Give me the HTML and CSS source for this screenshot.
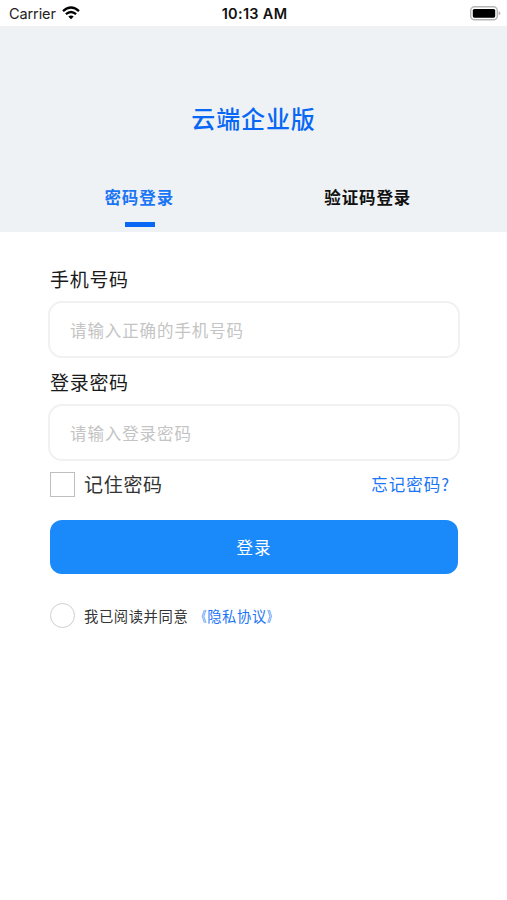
FILE: index.html
```html
<!DOCTYPE html>
<html lang="zh-CN">
<head>
<meta charset="utf-8">
<title>云端企业版</title>
<link rel="stylesheet" href="styles.css">
</head>
<body>
<div class="status">
  <div class="carrier"><span>Carrier</span>
    <svg width="18" height="14" viewBox="0 0 18 14" fill="none" stroke="#000" stroke-width="2.3"><path d="M1 5.1Q9-2 17 5.1"/><path d="M3.9 8.2Q9 3.7 14.1 8.2"/><path d="M6.3 10.5Q9 8.3 11.7 10.5L9 13.3Z" fill="#000" stroke="none"/></svg>
  </div>
  <div class="time">10:13 AM</div>
  <svg class="battery" width="31" height="15" viewBox="0 0 31 15"><rect x=".7" y=".8" width="26.6" height="13" rx="3.8" fill="#fff" stroke="#b5b5b5" stroke-width="1.4"/><rect x="2.8" y="2.9" width="22.4" height="8.8" rx="1.6"/><path d="M28.6 5.2q1.8.6 1.8 2.1t-1.8 2.1z" fill="#b5b5b5"/></svg>
</div>
<header class="hero">
  <h1>云端企业版</h1>
  <nav class="tabs">
    <a class="tab active">密码登录</a>
    <a class="tab">验证码登录</a>
  </nav>
</header>
<main class="form">
  <label for="phone">手机号码</label>
  <input id="phone" type="text" placeholder="请输入正确的手机号码">
  <label for="pass">登录密码</label>
  <input id="pass" type="password" placeholder="请输入登录密码">
  <div class="options">
    <span class="checkbox"></span>
    <span class="remember">记住密码</span>
    <a class="forgot">忘记密码?</a>
  </div>
  <button type="button">登录</button>
  <div class="agreement">
    <span class="radio"></span>
    <span>我已阅读并同意</span>
    <a class="policy"><span class="mark open">《</span>隐私协议<span class="mark close">》</span></a>
  </div>
</main>
</body>
</html>
```
FILE: styles.css
```css
* { box-sizing: border-box; }
body {
  margin: 0;
  min-height: 900px;
  background: #fff;
  color: #1a1a1a;
  font-family: "Noto Sans CJK SC", sans-serif;
}
.status {
  display: grid;
  grid-template-columns: 1fr auto 1fr;
  align-items: center;
  height: 26px;
  padding: 1px 6px 0 9px;
  font: 14.5px/25px Inter, sans-serif;
  color: #222;
}
.carrier { display: flex; align-items: center; gap: 6px; letter-spacing: -.1px; }
.carrier svg { margin-bottom: 1px; }
.time { margin-right: 1px; font-weight: 600; letter-spacing: .3px; color: #111; }
.battery { justify-self: end; margin-bottom: 1px; }
.hero {
  height: 206px;
  padding-top: 74px;
  background: #eef2f5;
}
h1 {
  margin: 0;
  text-align: center;
  font-size: 24px;
  line-height: 36px;
  font-weight: 500;
  letter-spacing: .9px;
  color: #0868f5;
}
.tabs {
  display: flex;
  padding: 46px 25px 0;
}
.tab {
  display: flex;
  flex-direction: column;
  align-items: center;
  flex: 1;
  font-size: 16.5px;
  line-height: 30px;
  font-weight: 600;
  letter-spacing: .9px;
  color: #111;
}
.tab.active { color: #1a75f5; }
.tab.active::after {
  content: "";
  width: 30px;
  height: 5px;
  margin: 10px 0 0 1px;
  background: #0868f5;
}
.form {
  display: flex;
  flex-direction: column;
  padding: 32px 47px 0 48px;
}
label {
  height: 30px;
  padding-left: 2px;
  font-size: 19px;
  line-height: 30px;
  letter-spacing: .7px;
}
input {
  height: 57px;
  margin: 7px 0 9px;
  padding: 0 20px;
  border: 2px solid #f1f1f1;
  border-radius: 14px;
  background: #fff;
  font: 16.5px "Noto Sans CJK SC", sans-serif;
  letter-spacing: .9px;
}
input::placeholder { color: #c4c4c4; opacity: 1; }
#pass { margin-bottom: 8px; }
.options {
  display: flex;
  align-items: center;
  height: 30px;
  padding: 0 10px 0 2px;
}
.checkbox {
  width: 25px;
  height: 25px;
  border: 1px solid #bfbfbf;
}
.remember {
  margin: -1px 0 0 9px;
  font-size: 19px;
  letter-spacing: .7px;
  color: #333;
}
.forgot {
  margin-left: auto;
  font-size: 16.5px;
  letter-spacing: 1px;
  color: #1a75f5;
}
button {
  height: 54px;
  margin: 21px 2px 0;
  padding: 0;
  border: 0;
  border-radius: 12px;
  background: #1a8afa;
  color: #fff;
  font: 16.5px "Noto Sans CJK SC", sans-serif;
  letter-spacing: .9px;
}
.agreement {
  display: flex;
  align-items: center;
  height: 26px;
  margin: 28px 2px 0;
  font-size: 14.3px;
  letter-spacing: .6px;
  color: #333;
}
.radio {
  width: 25px;
  height: 25px;
  margin-right: 9px;
  border: 1.5px solid #cfcfcf;
  border-radius: 50%;
}
.policy { margin-left: 4px; color: #1a75f5; }
.mark { display: inline-block; }
.open { transform: scaleX(.7); transform-origin: right; }
.close { transform: scaleX(.7); transform-origin: left; }
```
